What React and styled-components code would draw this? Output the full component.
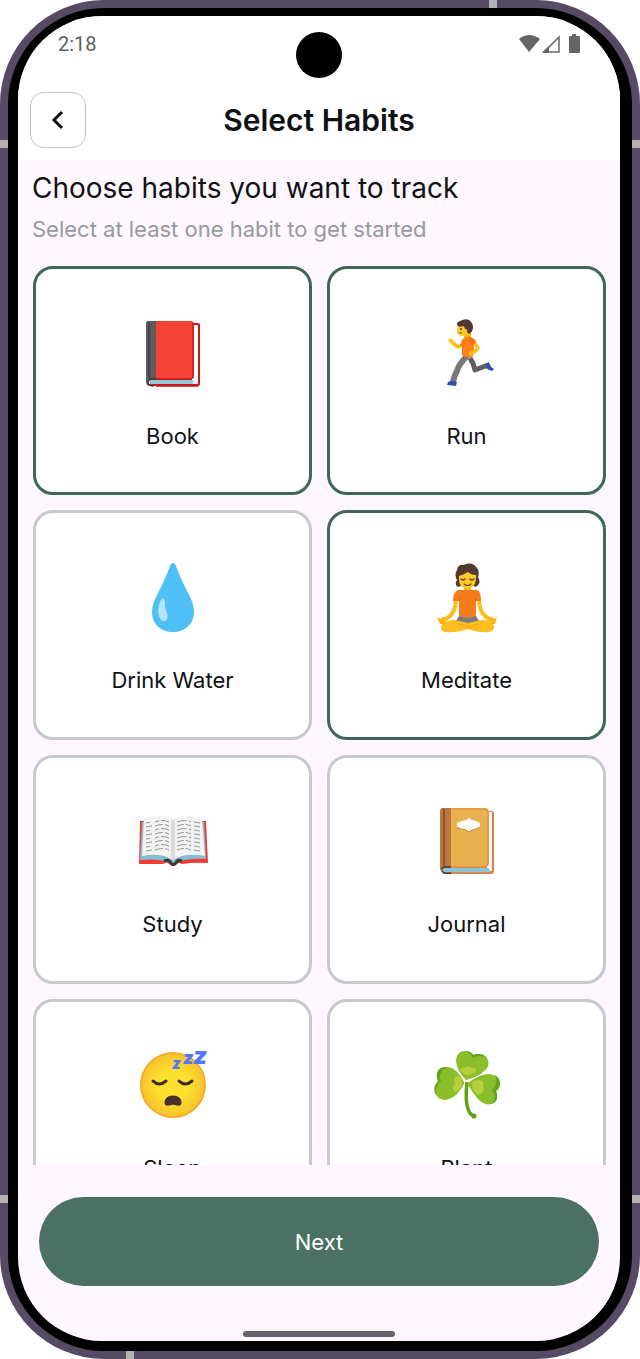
import styled, { createGlobalStyle } from 'styled-components'
import { useState } from 'react'

const GlobalStyle = createGlobalStyle`
  * {
    box-sizing: border-box;
  }
  body {
    margin: 0;
    background: #ffffff;
    font-family: "Inter", "Liberation Sans", sans-serif;
    color: #0f1115;
  }
  button {
    font: inherit;
    color: inherit;
    cursor: pointer;
  }
`

const Phone = styled.div`
  position: relative;
  display: flex;
  height: 100vh;
  padding: 8px;
  border-radius: 104px;
  background: #564b62;
`

const Bezel = styled.div`
  display: flex;
  flex: 1;
  min-width: 0;
  padding: 8px 12px 10px 10px;
  border-radius: 96px;
  background: #000000;
`

const Screen = styled.main`
  display: flex;
  flex-direction: column;
  flex: 1;
  min-width: 0;
  overflow: hidden;
  border-radius: 84px;
  background: #fef7ff;
`

const Antenna = styled.span`
  position: absolute;
  width: 8px;
  height: 8px;
  background: #b3b1b4;
  ${props => props.$side}: 0;
  ${props => props.$from}: ${props => props.$at}px;
`

const Camera = styled.span`
  position: absolute;
  top: 32px;
  left: calc(50% - 24px);
  width: 46px;
  height: 46px;
  border-radius: 50%;
  background: #000000;
`

const StatusBar = styled.div`
  display: flex;
  justify-content: space-between;
  height: 76px;
  padding: 16px 38px 0 40px;
  background: #ffffff;
  color: #5f5e62;
  font-family: Roboto, sans-serif;
  font-size: 20px;
  line-height: 24px;
`

const StatusIcons = styled.svg`
  width: 64px;
  height: 24px;
`

const Header = styled.header`
  display: grid;
  grid-template-columns: 56px 1fr 56px;
  align-items: center;
  padding: 0 12px 12px;
  background: #ffffff;
`

const BackButton = styled.button`
  display: flex;
  align-items: center;
  justify-content: center;
  width: 56px;
  height: 56px;
  padding: 0;
  border: 1px solid #c2c2c4;
  border-radius: 14px;
  background: #ffffff;
`

const Title = styled.h1`
  margin: 0;
  text-align: center;
  font-size: 30px;
  font-weight: 600;
  line-height: 36px;
`

const Intro = styled.section`
  padding: 10px 14px 23px;
`

const Heading = styled.h2`
  margin: 0 0 9px;
  font-size: 28px;
  font-weight: 400;
  line-height: 36px;
`

const Hint = styled.p`
  margin: 0;
  color: #979a9b;
  font-size: 22px;
  line-height: 28px;
`

const HabitGrid = styled.section`
  display: grid;
  grid-template-columns: 1fr 1fr;
  grid-auto-rows: max-content;
  gap: 15px;
  flex: 1;
  min-height: 0;
  padding: 0 14px 0 15px;
  overflow-y: auto;
  scrollbar-width: none;
`

const Card = styled.button`
  display: flex;
  flex-direction: column;
  align-items: center;
  justify-content: center;
  gap: 32px;
  aspect-ratio: 1.217;
  padding: 6px 0 0;
  border: 3px solid ${props => (props.$selected ? '#3f6858' : '#c8c9cc')};
  border-radius: 20px;
  background: #ffffff;
  font-size: 22px;
  line-height: 28px;
`

const Emoji = styled.svg`
  width: 72px;
  height: 72px;
  overflow: visible;
`

const Footer = styled.footer`
  display: flex;
  flex-direction: column;
  align-items: center;
  padding: 32px 21px 4px;
`

const NextButton = styled.button`
  width: 100%;
  height: 89px;
  margin-bottom: 45px;
  border: 0;
  border-radius: 45px;
  background: #4a7163;
  color: #ffffff;
  font-size: 22px;
`

const HomeBar = styled.span`
  width: 152px;
  height: 6px;
  border-radius: 3px;
  background: #666468;
`

const BookIcon = () => (
  <>
    <path d="M16 5H61Q63 5 63 7V66Q63 68 61 68H13Z" fill="#c9171c" />
    <path d="M55 7H61V66H55Z" fill="#fff" />
    <path d="M14 62H58V66H14Q11 64 14 62Z" fill="#94c7d8" />
    <path d="M56 59Q58 64 61 64V66H56Z" fill="#dceff3" />
    <path d="M12 3H54Q57 3 57 6V58Q57 61 54 61H13Q11 62 11 65L9 64V6Q9 3 12 3Z" fill="#f44336" />
    <path d="M56 5V58Q56 61 52 61H19" fill="none" stroke="#bd1c1c" strokeWidth="1.3" />
    <path d="M12 3H19V61H14Q10 62 12 66Q13 68 19 68H13Q9 68 9 63V6Q9 3 12 3Z" fill="#5e5b60" />
    <path d="M12 4V61M19 61H14Q11 62 11 65Q12 68 17 68" fill="none" stroke="#37383d" strokeWidth="1.3" />
    <path d="M19 68H61" stroke="#c9171c" strokeWidth="1.5" />
  </>
)

const RunIcon = () => (
  <>
    <path d="M39 40Q43 46 44 52L57 47" fill="none" stroke="#5f6064" strokeWidth="5" strokeLinejoin="round" />
    <path d="M37 37Q27 47 26 53Q23 58 22 64" fill="none" stroke="#78787c" strokeWidth="6" />
    <path d="M17 64Q21 62 26 64L25 68L16 67Z" fill="#2a53a4" />
    <path d="M55 46L58 44Q59 49 63 51L61 53Q57 52 55 50Z" fill="#2a53a4" />
    <path d="M33 26L27 29L21 24" fill="none" stroke="#fdb813" strokeWidth="3.5" strokeLinejoin="round" />
    <path d="M17 23L19 20L22 22L24 25L21 27Z" fill="#ffca28" />
    <path d="M33 15H40V22H33Z" fill="#f9b916" />
    <path d="M31 22Q34 18 40 19L44 22Q42 28 43 34L42 38Q36 41 31 37V29L29 27Z" fill="#fb8017" />
    <path d="M43 24L47 30Q45 34 38 36" fill="none" stroke="#fdc01d" strokeWidth="3.5" strokeLinejoin="round" />
    <path d="M39 20Q44 20 45 24L41 28Q38 25 39 20Z" fill="#f4701b" />
    <path d="M27 7Q26 11 26 14Q27 18 32 18Q39 17 39 10L34 5Z" fill="#ffca28" />
    <path d="M27 8Q24 5 29 3Q34 0 38 2Q42 5 42 9Q42 14 38 16L36 14Q37 11 34 11L33 8Q29 9 27 8Z" fill="#543930" />
    <circle cx="30" cy="11" r="1" fill="#49332d" />
    <path d="M28 15L31 15" stroke="#8d4d2e" />
  </>
)

const WaterIcon = () => (
  <>
    <path d="M36 1Q38 1 39 4Q42 13 51 31Q57 41 57 50C57 62 48 70 36 70S15 62 15 50Q15 42 21 31Q30 13 33 4Q34 1 36 1Z" fill="#4fc0f6" />
    <path d="M26 36Q28 36 28 43Q28 47 30 51Q32 57 28 59Q24 60 22 54C20 47 22 39 26 36Z" fill="#b5e3fb" />
  </>
)

const MeditateIcon = () => (
  <>
    <path d="M26 8Q27 2 33 3Q41 -1 46 6Q49 10 47 15Q50 20 47 23Q45 26 43 24H30Q25 26 25 22Q24 21 26 18Q23 13 26 8Z" fill="#543930" />
    <path d="M33 23H40V30H33Z" fill="#f5a912" />
    <path d="M28 14Q34 12 37 10Q40 13 45 13V17Q44 27 36 27Q28 26 28 17Z" fill="#ffca28" />
    <path d="M30 17Q32 19 34 17M39 17Q41 19 43 17M33 22Q37 25 40 22" fill="none" stroke="#6d3b24" strokeWidth="1.2" strokeLinecap="round" />
    <path d="M25 38Q25 48 19 54L12 59" fill="none" stroke="#fdbd1c" strokeWidth="4" />
    <path d="M48 38Q48 48 54 54L61 59" fill="none" stroke="#fdbd1c" strokeWidth="4" />
    <path d="M27 28H46Q50 29 50 39H45V56H28V39H22Q22 30 27 28Z" fill="#f57c1a" />
    <path d="M28 36V39M45 36V39" stroke="#d86516" />
    <path d="M25 59L28 54Q36 57 45 54L48 59L37 62Z" fill="#7c7c80" />
    <path d="M12 61Q20 56 28 59L37 61L46 59Q56 56 62 62Q66 68 58 70Q49 71 37 67Q24 71 14 70Q7 68 12 61Z" fill="#fdbf1f" />
    <path d="M27 62L38 65M48 62L36 66" stroke="#f0a51a" strokeWidth="1" />
    <path d="M6 55L10 57L12 54L14 58L12 62H9ZM66 55L63 57L60 54L58 58L61 62H64Z" fill="#ffb414" />
  </>
)

const StudyIcon = () => (
  <>
    <path d="M3 15H69L71 57Q57 56 45 58Q41 56 40 58Q36 62 32 58Q30 55 26 58L2 58Z" fill="#f33c31" />
    <path d="M5 16H67L69 53Q51 52 36 57Q21 52 3 54Z" fill="#82bed3" />
    <path d="M7 12Q24 8 33 12L36 15L39 12Q50 8 65 12L68 50Q48 46 36 54Q24 46 5 50Z" fill="#f3f3f3" />
    <path d="M34 12L36 15L38 12V53H34Z" fill="#dadbdd" />
    <path d="M27 55Q32 53 34 57Q36 60 39 57Q40 53 45 55" fill="none" stroke="#38383d" strokeWidth="3" />
    {[16, 20, 24, 28, 32, 36, 40, 44].map(y => (
      <g key={y} fill="none" stroke="#949698" strokeWidth="1">
        <path d={`M9 ${y + 1}L15 ${y}M18 ${y}Q26 ${y - 3} 32 ${y}`} strokeDasharray={y % 8 ? '8 2' : '4 2 9 2'} />
        <path d={`M40 ${y}Q47 ${y - 3} 54 ${y}M57 ${y}L63 ${y + 1}`} strokeDasharray={y % 8 ? '7 2' : '10 2'} />
      </g>
    ))}
  </>
)

const JournalIcon = () => (
  <>
    <path d="M16 5H61Q63 5 63 8V65Q63 68 60 68H12Z" fill="#d9834a" />
    <path d="M57 6H61V65H56Z" fill="#f7f6f7" />
    <path d="M13 62H57L60 66H13Q10 64 13 62Z" fill="#8bc3d8" />
    <path d="M12 2H54Q58 2 58 6V57Q58 61 54 61H13L9 64V6Q9 2 12 2Z" fill="#e9b04f" />
    <path d="M11 3H54Q57 3 57 6V57Q57 61 53 61H13" fill="none" stroke="#d88b3d" strokeWidth="1" />
    <path d="M12 2H20V61H13Q10 62 10 65L9 63V6Q9 2 12 2Z" fill="#bd7839" />
    <path d="M13 3V61" stroke="#815638" strokeWidth="2" />
    <path d="M20 61H14Q10 62 11 65Q12 68 20 67" fill="none" stroke="#403832" strokeWidth="1.3" />
    <path d="M26 17L30 15Q35 15 38 12Q41 15 45 15L49 17V21L45 23Q41 23 38 26Q35 23 30 23L26 21Z" fill="#fffdf8" />
    <path d="M26 21L30 23Q35 23 38 26Q41 23 45 23L49 21" fill="none" stroke="#d6863e" strokeWidth="1" />
  </>
)

const SleepIcon = () => (
  <>
    <defs>
      <radialGradient id="face">
        <stop offset="0.45" stopColor="#fde030" />
        <stop offset="0.92" stopColor="#f8c52c" />
        <stop offset="1" stopColor="#f29b1d" />
      </radialGradient>
    </defs>
    <circle cx="36" cy="35" r="33" fill="url(#face)" />
    <path d="M16 31Q22 37 29 31M42 31Q48 37 55 31" fill="none" stroke="#3e2c2b" strokeWidth="3" strokeLinecap="round" />
    <path d="M28 53Q28 46 36 46T44 53Q44 56 40 55Q36 53 32 55Q28 56 28 53Z" fill="#4d302a" stroke="#33252a" strokeWidth="1" />
    <g fill="#5278f5" fontFamily="Inter, sans-serif" fontWeight="900" fontStyle="italic">
      <text x="35" y="19" fontSize="15">z</text>
      <text x="46" y="14" fontSize="18">z</text>
      <text x="56" y="14" fontSize="24">z</text>
    </g>
  </>
)

const PlantIcon = () => (
  <>
    <path d="M36 32Q34 50 37 59Q39 65 44 67" fill="none" stroke="#61a21c" strokeWidth="3.5" />
    <circle cx="43" cy="66" r="2.5" fill="#61a21c" />
    <path d="M35 30Q25 20 25 10Q26 1 34 1Q40 1 42 5Q51 2 56 8Q61 16 51 23Q44 28 35 30Z" fill="#8abf2b" />
    <path d="M34 1Q40 1 42 5Q51 2 56 8Q49 4 42 8Q40 3 34 1Z" fill="#60a31e" />
    <path d="M33 32Q26 18 17 17Q8 16 6 23Q5 27 7 31Q1 38 5 45Q10 52 18 49Q26 47 33 34Z" fill="#8abf2b" />
    <path d="M17 17Q8 16 6 23Q5 27 7 31Q1 38 5 45Q3 37 10 31Q6 22 17 17Z" fill="#60a31e" />
    <path d="M37 33Q48 24 59 24Q69 26 69 34Q69 38 65 41Q69 50 61 54Q53 56 47 49Q42 43 37 35Z" fill="#8abf2b" />
    <path d="M64 25Q69 28 69 34Q69 38 65 41Q69 50 61 54Q66 47 61 40Q68 34 64 25Z" fill="#60a31e" />
    <path d="M30 22Q29 17 33 18Q37 15 40 18Q45 17 45 22L36 26ZM30 27L25 26Q21 30 24 33Q20 38 24 42Q28 42 31 35ZM42 31L48 30Q54 31 52 37Q54 43 47 45Q42 41 41 36Z" fill="#b7cf3d" />
  </>
)

const Habits = [
  { name: "Book", icon: BookIcon },
  { name: "Run", icon: RunIcon },
  { name: "Drink Water", icon: WaterIcon },
  { name: "Meditate", icon: MeditateIcon },
  { name: "Study", icon: StudyIcon },
  { name: "Journal", icon: JournalIcon },
  { name: "Sleep", icon: SleepIcon },
  { name: "Plant", icon: PlantIcon },
]

const HabitCard = ({ habit, selected, toggle }) => {
  const Icon = habit.icon
  return (
    <Card type="button" $selected={selected} aria-pressed={selected} onClick={() => toggle(habit.name)}>
      <Emoji viewBox="0 0 72 72" aria-hidden="true"><Icon /></Emoji>
      <span>{habit.name}</span>
    </Card>
  )
}

const App = () => {
  const [selected, setSelected] = useState(["Book", "Run", "Meditate"])

  const toggle = name => {
    setSelected(list => (list.includes(name) ? list.filter(n => n !== name) : [...list, name]))
  }

  return (
    <>
      <GlobalStyle />
      <Phone>
        <Bezel>
          <Screen>
            <StatusBar>
              <span>2:18</span>
              <StatusIcons viewBox="0 0 64 24" aria-hidden="true">
                <path d="M1 7Q11 -1 22 7L11 20Z" fill="#666468" />
                <path d="M41 5V20H26Z" fill="none" stroke="#666468" strokeWidth="1.5" />
                <path d="M24 21L31 14V21Z" fill="#666468" />
                <path d="M54 2H58V4H61Q62 4 62 5V20Q62 21 61 21H52Q51 21 51 20V5Q51 4 52 4H54Z" fill="#666468" />
              </StatusIcons>
            </StatusBar>
            <Header>
              <BackButton type="button" aria-label="Back">
                <svg width="24" height="24" viewBox="0 0 24 24" fill="none" stroke="#0f1115" strokeWidth="3">
                  <path d="M16 4L8 12L16 20" />
                </svg>
              </BackButton>
              <Title>Select Habits</Title>
            </Header>
            <Intro>
              <Heading>Choose habits you want to track</Heading>
              <Hint>Select at least one habit to get started</Hint>
            </Intro>
            <HabitGrid>
              {Habits.map(h => <HabitCard key={h.name} habit={h} selected={selected.includes(h.name)} toggle={toggle} />)}
            </HabitGrid>
            <Footer>
              <NextButton type="button">Next</NextButton>
              <HomeBar />
            </Footer>
          </Screen>
        </Bezel>
        <Camera />
        <Antenna $side="top" $from="left" $at={489} />
        <Antenna $side="left" $from="top" $at={140} />
        <Antenna $side="right" $from="top" $at={140} />
        <Antenna $side="left" $from="bottom" $at={156} />
        <Antenna $side="right" $from="bottom" $at={156} />
        <Antenna $side="bottom" $from="left" $at={126} />
      </Phone>
    </>
  )
}

export default App
